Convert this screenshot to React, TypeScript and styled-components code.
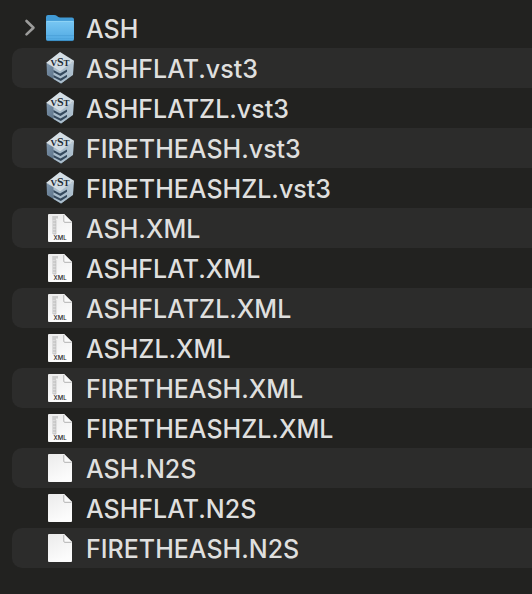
import React from "react";
import styled, { createGlobalStyle } from "styled-components";

const GlobalStyle = createGlobalStyle`
  body {
    margin: 0;
    background: #222220;
  }
`;

const FileBrowser = styled.main`
  padding: 8px 0 26px 12px;
  font-family: Inter, "Liberation Sans", sans-serif;
`;

const FileList = styled.ul`
  margin: 0;
  padding: 0;
  list-style: none;
`;

const Row = styled.li`
  display: grid;
  grid-template-columns: 24px 32px 1fr;
  align-items: center;
  height: 40px;
  padding-left: 8px;
  border-radius: 10px 0 0 10px;

  &:nth-child(even) {
    background: #2c2c2b;
  }
`;

const Disclosure = styled.button`
  display: flex;
  width: 20px;
  height: 24px;
  padding: 0;
  border: 0;
  background: none;
  align-items: center;
  justify-content: center;
`;

const IconCell = styled.span`
  display: flex;
  grid-column: 2;
`;

const Icon = styled.svg`
  display: block;
  width: 32px;
  height: 36px;
`;

const FileName = styled.span`
  padding: 2px 0 0 10px;
  font-size: 25px;
  font-weight: 500;
  line-height: 38px;
  color: #dfdfde;
  white-space: nowrap;
`;

type Kind = "folder" | "vst" | "xml" | "blank";

const Chevron = () => (
  <svg width="20" height="20" viewBox="0 0 20 20" fill="none" aria-hidden="true">
    <path d="M6.5 3 L13.5 9.7 L6.5 16.4" stroke="#9c9c9b" strokeWidth="2.6" strokeLinecap="round" strokeLinejoin="round" />
  </svg>
);

const FolderIcon = () => (
  <Icon viewBox="0 0 32 36" aria-hidden="true">
    <defs>
      <linearGradient id="folder-front" x1="0" y1="0" x2="0" y2="1">
        <stop offset="0" stopColor="#78c7f3" />
        <stop offset="1" stopColor="#50a9e2" />
      </linearGradient>
    </defs>
    <path d="M2 7 Q2 5 4 5 H10 Q12 5 13 6 Q14 7.4 16 7.4 H28 Q30 7.4 30 9.4 V28 H2Z" fill="#419bd6" />
    <path d="M2 12 Q2 11 3.5 11 H28.5 Q30 11 30 12 V29 Q30 31 28 31 H4 Q2 31 2 29Z" fill="url(#folder-front)" />
    <path d="M2.5 11.4 H29.5" stroke="#99d8f7" strokeWidth="0.7" />
    <path d="M2 25.6 H30" stroke="#4398d2" strokeWidth="0.6" />
    <path d="M2 28.5 H30" stroke="#489ed6" strokeWidth="0.5" />
    <path d="M3 30.6 H29" stroke="#2f7fb5" strokeWidth="0.7" />
  </Icon>
);

const VstIcon = () => (
  <Icon viewBox="0 0 32 36" aria-hidden="true">
    <defs>
      <linearGradient id="cube-top" x1="0" y1="0" x2="1" y2="1">
        <stop offset="0" stopColor="#dce5eb" />
        <stop offset="1" stopColor="#c9d6df" />
      </linearGradient>
      <linearGradient id="cube-left" x1="0" y1="0" x2="1" y2="1">
        <stop offset="0" stopColor="#7e95ab" />
        <stop offset="1" stopColor="#4d6379" />
      </linearGradient>
      <linearGradient id="cube-right" x1="0" y1="1" x2="1" y2="0">
        <stop offset="0" stopColor="#98adbd" />
        <stop offset="1" stopColor="#b9cad7" />
      </linearGradient>
    </defs>
    <path d="M2.5 12.5 L16 21 L17 33.5 L3 25Z" fill="url(#cube-left)" />
    <path d="M16 21 L30 11 L29 25 L17 33.5Z" fill="url(#cube-right)" />
    <path d="M9.5 17.2 L16 21 L23 16.5 L23 29 L17 33.5 L9.5 29Z" fill="#a9bccb" />
    <path d="M9.5 20 L16 23.5 L23 19.5 V21.8 L16.5 26 L9.5 22.2Z" fill="#34485c" />
    <path d="M9.5 25 L16.5 28.6 L23 24.8 V27 L16.8 31 L9.5 27.2Z" fill="#34485c" />
    <path d="M16 2 L30 10.8 L16 21 L2.5 12.5Z" fill="url(#cube-top)" />
    <path d="M2.7 12.7 L16 20.8 L30 11" stroke="#e2ebf0" strokeWidth="0.7" fill="none" />
    <text x="16" y="15.5" textAnchor="middle" fontFamily="Liberation Serif, serif" fontSize="9" fontWeight="700" fill="#222b35">
      V<tspan fontSize="12">S</tspan>T
    </text>
  </Icon>
);

const DocumentIcon = ({ xml = false }: { xml?: boolean }) => (
  <Icon viewBox="0 0 32 36" aria-hidden="true">
    <defs>
      <linearGradient id="paper" x1="0" y1="0" x2="0.4" y2="1">
        <stop offset="0" stopColor="#ebebeb" />
        <stop offset="1" stopColor="#fcfcfc" />
      </linearGradient>
    </defs>
    <path d="M5 4 H20 L28 12 V31 Q28 32 27 32 H5 Q4 32 4 31 V5 Q4 4 5 4Z" fill="url(#paper)" />
    {xml && (
      <>
        <path d="M8 6 H14 V9 H12 V24 H8Z" fill="#dcdcdc" />
        <path d="M8.5 7 H14 M8.5 9 H12 M9 12 H12 M9 15 H12 M9 18 H12 M9 21 H12 M9 24 H12" stroke="#b0b0b0" strokeWidth="0.7" />
        <path d="M12 10 V24" stroke="#bbb" strokeWidth="0.6" />
        <text x="16" y="30" textAnchor="middle" fontFamily="Inter, sans-serif" fontSize="6" fontWeight="500" fill="#222">XML</text>
      </>
    )}
    <path d="M20 4 V11 Q20 12 21 12 H28Z" fill="#fafafa" />
    <path d="M19.8 5 V11.3 Q19.8 12.3 20.8 12.3 H27.5" fill="none" stroke="#aaa" strokeWidth="0.9" />
  </Icon>
);

const FileIcon = ({ kind }: { kind: Kind }) => {
  if (kind === "folder") return <FolderIcon />;
  if (kind === "vst") return <VstIcon />;
  return <DocumentIcon xml={kind === "xml"} />;
};

const files: { name: string; kind: Kind }[] = [
  { name: "ASH", kind: "folder" },
  { name: "ASHFLAT.vst3", kind: "vst" },
  { name: "ASHFLATZL.vst3", kind: "vst" },
  { name: "FIRETHEASH.vst3", kind: "vst" },
  { name: "FIRETHEASHZL.vst3", kind: "vst" },
  { name: "ASH.XML", kind: "xml" },
  { name: "ASHFLAT.XML", kind: "xml" },
  { name: "ASHFLATZL.XML", kind: "xml" },
  { name: "ASHZL.XML", kind: "xml" },
  { name: "FIRETHEASH.XML", kind: "xml" },
  { name: "FIRETHEASHZL.XML", kind: "xml" },
  { name: "ASH.N2S", kind: "blank" },
  { name: "ASHFLAT.N2S", kind: "blank" },
  { name: "FIRETHEASH.N2S", kind: "blank" },
];

export default function App() {
  return (
    <>
      <GlobalStyle />
      <FileBrowser>
        <FileList>
          {files.map(({ name, kind }) => (
            <Row key={name}>
              {kind === "folder" && (
                <Disclosure type="button" aria-label={`Expand ${name}`} aria-expanded={false}>
                  <Chevron />
                </Disclosure>
              )}
              <IconCell>
                <FileIcon kind={kind} />
              </IconCell>
              <FileName>{name}</FileName>
            </Row>
          ))}
        </FileList>
      </FileBrowser>
    </>
  );
}
